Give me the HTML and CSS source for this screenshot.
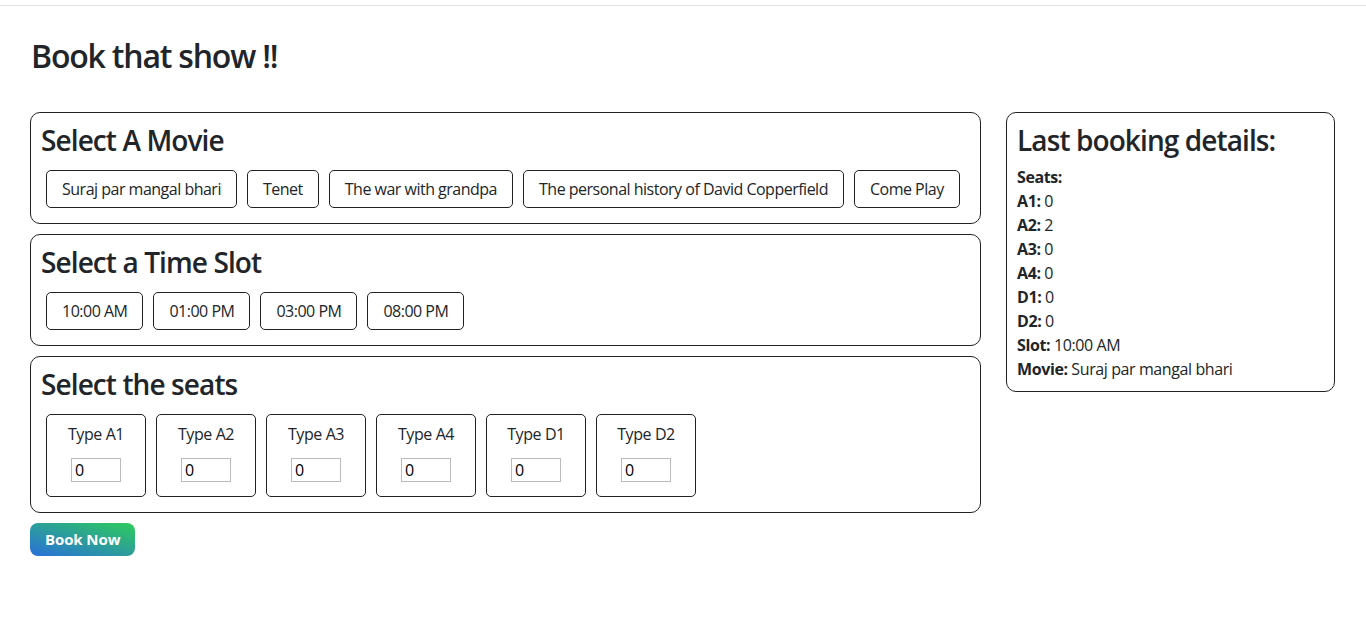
FILE: index.html
```html
<!DOCTYPE html>
<html lang="en">
<head>
  <meta charset="UTF-8" />
  <title>Book that show</title>
  <link rel="stylesheet" href="styles.css">
</head>
<body>
  <div class="topbar"></div>

  <div class="page">
    <h1 class="title">Book that show !!</h1>

    <div class="row">
      <div class="left">
        <div class="box">
          <h3>Select A Movie</h3>
          <div class="options">
            <button class="option">Suraj par mangal bhari</button>
            <button class="option">Tenet</button>
            <button class="option">The war with grandpa</button>
            <button class="option">The personal history of David Copperfield</button>
            <button class="option">Come Play</button>
          </div>
        </div>

        <div class="box">
          <h3>Select a Time Slot</h3>
          <div class="options">
            <button class="option">10:00 AM</button>
            <button class="option">01:00 PM</button>
            <button class="option">03:00 PM</button>
            <button class="option">08:00 PM</button>
          </div>
        </div>

        <div class="box">
          <h3>Select the seats</h3>
          <div class="options">
            <div class="seat"><span>Type A1</span><input type="number" value="0"></div>
            <div class="seat"><span>Type A2</span><input type="number" value="0"></div>
            <div class="seat"><span>Type A3</span><input type="number" value="0"></div>
            <div class="seat"><span>Type A4</span><input type="number" value="0"></div>
            <div class="seat"><span>Type D1</span><input type="number" value="0"></div>
            <div class="seat"><span>Type D2</span><input type="number" value="0"></div>
          </div>
        </div>

        <button class="book">Book Now</button>
      </div>

      <div class="right">
        <div class="box">
          <h3>Last booking details:</h3>
          <div class="details">
            <p><b>Seats:</b></p>
            <p><b>A1:</b> 0</p>
            <p><b>A2:</b> 2</p>
            <p><b>A3:</b> 0</p>
            <p><b>A4:</b> 0</p>
            <p><b>D1:</b> 0</p>
            <p><b>D2:</b> 0</p>
            <p><b>Slot:</b> 10:00 AM</p>
            <p><b>Movie:</b> Suraj par mangal bhari</p>
          </div>
        </div>
      </div>
    </div>
  </div>
</body>
</html>
```

FILE: styles.css
```css
body {
  margin: 0;
  font-family: "Open Sans", "Noto Sans", sans-serif;
  font-size: 16px;
  line-height: 24px;
  letter-spacing: -0.4px;
  color: #212529;
  background: #fff;
}
.topbar {
  height: 5px;
  border-bottom: 1px solid #dee2e6;
}
.page {
  padding: 0 30px;
}
.title {
  font-size: 32px;
  font-weight: 600;
  line-height: 38px;
  letter-spacing: -1.2px;
  margin: 31px 0 0;
  padding-left: 1px;
}
.row {
  display: flex;
  gap: 25px;
  margin-top: 37px;
  align-items: flex-start;
}
.left {
  width: 951px;
  display: flex;
  flex-direction: column;
  gap: 10px;
  align-items: flex-start;
}
.right {
  width: 329px;
}
.box {
  box-sizing: border-box;
  width: 100%;
  border: 1px solid #222;
  border-radius: 10px;
  padding: 10px;
}
.box h3 {
  font-size: 28px;
  font-weight: 600;
  line-height: 34px;
  letter-spacing: -0.9px;
  margin: 0 0 8px;
}
.options {
  display: flex;
  flex-wrap: wrap;
}
.option {
  font-family: inherit;
  font-size: 16px;
  line-height: 24px;
  letter-spacing: -0.5px;
  color: #212529;
  background: #fff;
  border: 1px solid #222;
  border-radius: 5px;
  padding: 6px 15px;
  margin: 5px;
  cursor: pointer;
}
.seat {
  box-sizing: border-box;
  width: 100px;
  height: 83px;
  margin: 5px;
  border: 1px solid #222;
  border-radius: 5px;
  padding-top: 7px;
  display: flex;
  flex-direction: column;
  align-items: center;
}
.seat input {
  box-sizing: border-box;
  width: 50px;
  height: 24px;
  margin-top: 12px;
  border: 1px solid #bbb;
  padding: 0 3px;
  font-family: inherit;
  font-size: 16px;
  color: #000;
  -moz-appearance: textfield;
}
.seat input::-webkit-inner-spin-button,
.seat input::-webkit-outer-spin-button {
  -webkit-appearance: none;
  margin: 0;
}
.book {
  font-family: inherit;
  font-size: 15px;
  font-weight: 700;
  line-height: 23px;
  letter-spacing: -0.1px;
  color: #fff;
  border: none;
  border-radius: 8px;
  padding: 5px 15px;
  background: linear-gradient(to top right, #2a6fdb, #2ecc5a);
  cursor: pointer;
}
.details p {
  margin: 0;
}
```
